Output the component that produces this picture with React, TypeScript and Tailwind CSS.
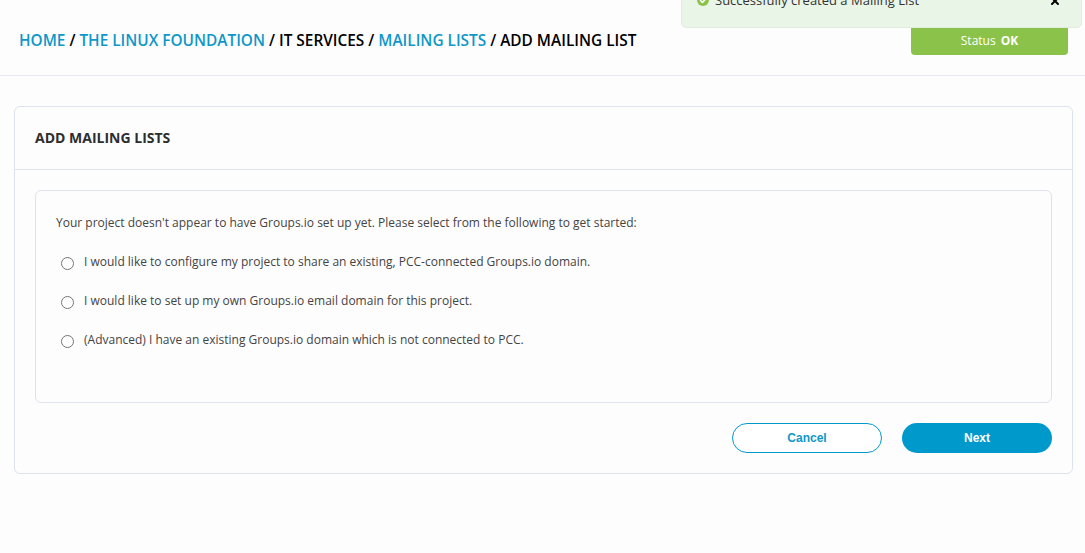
import { Check, X } from "lucide-react";

const options = [
  "I would like to configure my project to share an existing, PCC-connected Groups.io domain.",
  "I would like to set up my own Groups.io email domain for this project.",
  "(Advanced) I have an existing Groups.io domain which is not connected to PCC.",
];

export default function App() {
  return (
    <div className="relative h-[553px] overflow-hidden bg-[#fdfdfe] font-['Open_Sans',sans-serif] text-[#333]">
      {/* toast */}
      <div className="absolute left-[681px] top-[-20px] flex h-[48px] w-[401px] items-start justify-between rounded-[5px] border border-[#e3ebe3] bg-[#e9f5e6] pl-[15px] pr-[20px] pt-[10px]">
        <div className="flex items-center gap-[6px] text-[13px] leading-[18px] text-[#333]">
          <span className="flex h-[12px] w-[12px] items-center justify-center rounded-full bg-[#8bc34a]">
            <Check size={9} strokeWidth={4} className="text-white" />
          </span>
          Successfully created a Mailing List
        </div>
        <X size={12} strokeWidth={4} className="mt-[4px] text-black" />
      </div>

      <header className="flex h-[76px] items-center justify-between border-b border-[#e8eaef] pl-[19px] pr-[17px]">
        <div className="mt-[6px] text-[15.38px] font-semibold text-black">
          <a className="text-[#0e97c9]">HOME</a> / <a className="text-[#0e97c9]">THE LINUX FOUNDATION</a> / IT SERVICES /{" "}
          <a className="text-[#0e97c9]">MAILING LISTS</a> / ADD MAILING LIST
        </div>
        <div className="mt-[6px] flex h-[29px] w-[157px] items-center justify-center gap-[5px] rounded-b-[4px] bg-[#8bc34a] text-[12px] text-white">
          Status <b className="font-bold">OK</b>
        </div>
      </header>

      <main className="px-[14px] pt-[30px]">
        <section className="h-[368px] w-[1059px] rounded-[6px] border border-[#dde2ec] bg-[#fdfdfe]">
          <div className="flex h-[63px] items-center border-b border-[#dde2ec] px-[20px] pb-[2px]">
            <h2 className="text-[14px] font-bold text-[#2e2e2e]">ADD MAILING LISTS</h2>
          </div>
          <div className="px-[20px] pt-[20px]">
            <div className="h-[213px] rounded-[6px] border border-[#dde2ec] px-[20px] pt-[23px]">
              <p className="text-[12px] leading-[18px] text-[#444]">
                Your project doesn't appear to have Groups.io set up yet. Please select from the following to get started:
              </p>
              <div className="mt-[21px] flex flex-col gap-[21px] pl-[5px]">
                {options.map((o) => (
                  <label key={o} className="flex h-[18px] items-start gap-[10px] text-[12px] leading-[18px] text-[#444]">
                    <span className="mt-[4px] h-[13px] w-[13px] shrink-0 rounded-full border border-[#757575] bg-white" />
                    {o}
                  </label>
                ))}
              </div>
            </div>
            <div className="mt-[20px] flex justify-end gap-[20px]">
              <button className="h-[30px] w-[150px] rounded-full border border-[#0099cc] bg-white font-['Liberation_Sans',sans-serif] text-[12px] font-bold text-[#0e97c9]">
                Cancel
              </button>
              <button className="h-[30px] w-[150px] rounded-full bg-[#0099cc] font-['Liberation_Sans',sans-serif] text-[12px] font-bold text-white">
                Next
              </button>
            </div>
          </div>
        </section>
      </main>
    </div>
  );
}
